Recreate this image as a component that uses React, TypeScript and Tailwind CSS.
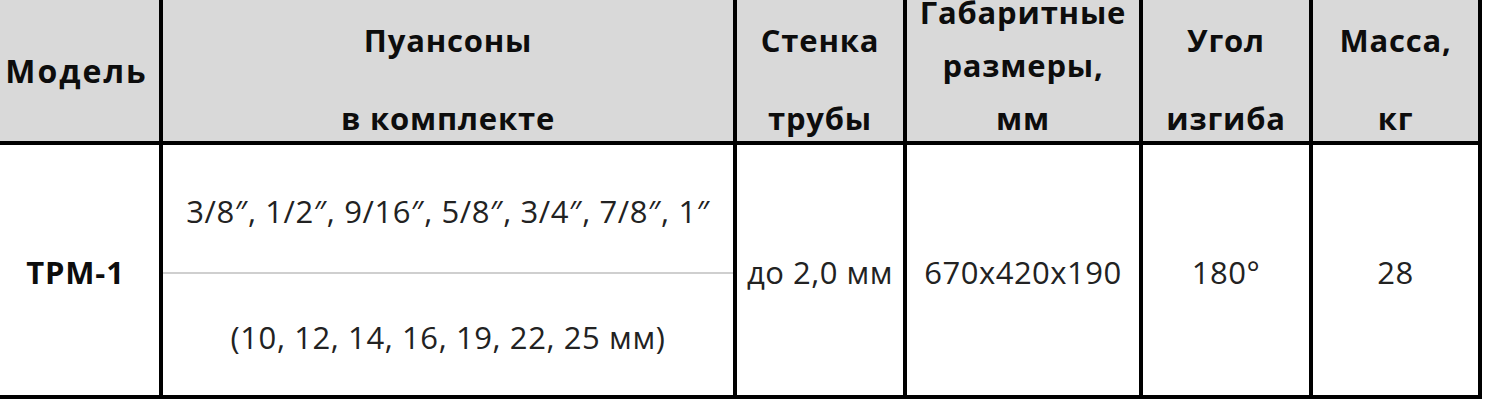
const headFont = { fontFamily: '"Open Sans", "Noto Sans", sans-serif' };

const HeadCell = ({ lines, gap }: { lines: string[]; gap: string }) => (
  <div
    className={`flex flex-col items-center justify-end overflow-hidden border-b-4 border-r-4 border-black bg-[#d9d9d9] pb-[3px] ${gap}`}
  >
    {lines.map((line) => (
      <div
        key={line}
        className="whitespace-nowrap text-[31px] font-bold leading-[40px] tracking-[0.8px] text-[#0d0d0d]"
      >
        {line}
      </div>
    ))}
  </div>
);

const BodyCell = ({ children }: { children: React.ReactNode }) => (
  <div className="flex items-center justify-center border-b-4 border-r-4 border-black bg-white pt-[4px] text-[31px] tracking-[0.5px] text-[#222]">
    <span className="whitespace-nowrap">{children}</span>
  </div>
);

export default function App() {
  return (
    <div className="h-[400px] w-[1486px] overflow-hidden bg-white" style={headFont}>
      <div className="grid w-[1482px] grid-cols-[163px_574px_170px_236px_170px_169px] grid-rows-[145px_254px]">
        <div className="flex items-center justify-center border-b-4 border-r-4 border-black bg-[#d9d9d9] pr-[6px]">
          <span className="text-[32px] font-bold leading-[40px] tracking-[2px] text-[#0d0d0d]">Модель</span>
        </div>
        <HeadCell lines={["Пуансоны", "в комплекте"]} gap="gap-[38px]" />
        <HeadCell lines={["Стенка", "трубы"]} gap="gap-[38px]" />
        <HeadCell lines={["Габаритные", "размеры,", "мм"]} gap="gap-[13px]" />
        <HeadCell lines={["Угол", "изгиба"]} gap="gap-[38px]" />
        <HeadCell lines={["Масса,", "кг"]} gap="gap-[38px]" />

        <div className="flex items-center justify-center border-b-4 border-r-4 border-black bg-white pr-[8px] pt-[4px]">
          <span className="text-[31px] font-bold tracking-[0.8px] text-[#0d0d0d]">ТРМ-1</span>
        </div>
        <div className="flex flex-col border-b-4 border-r-4 border-black bg-white text-[31px] tracking-[0.6px] text-[#222]">
          <div className="flex h-[127px] items-center justify-center pt-[5px]">
            <span className="whitespace-nowrap">3/8″, 1/2″, 9/16″, 5/8″, 3/4″, 7/8″, 1″</span>
          </div>
          <div className="h-[2px] bg-[#cfcfcf]" />
          <div className="flex flex-1 items-center justify-center pt-[6px]">
            <span className="whitespace-nowrap">(10, 12, 14, 16, 19, 22, 25 мм)</span>
          </div>
        </div>
        <BodyCell>до 2,0 мм</BodyCell>
        <BodyCell>670x420x190</BodyCell>
        <BodyCell>180°</BodyCell>
        <BodyCell>28</BodyCell>
      </div>
    </div>
  );
}
